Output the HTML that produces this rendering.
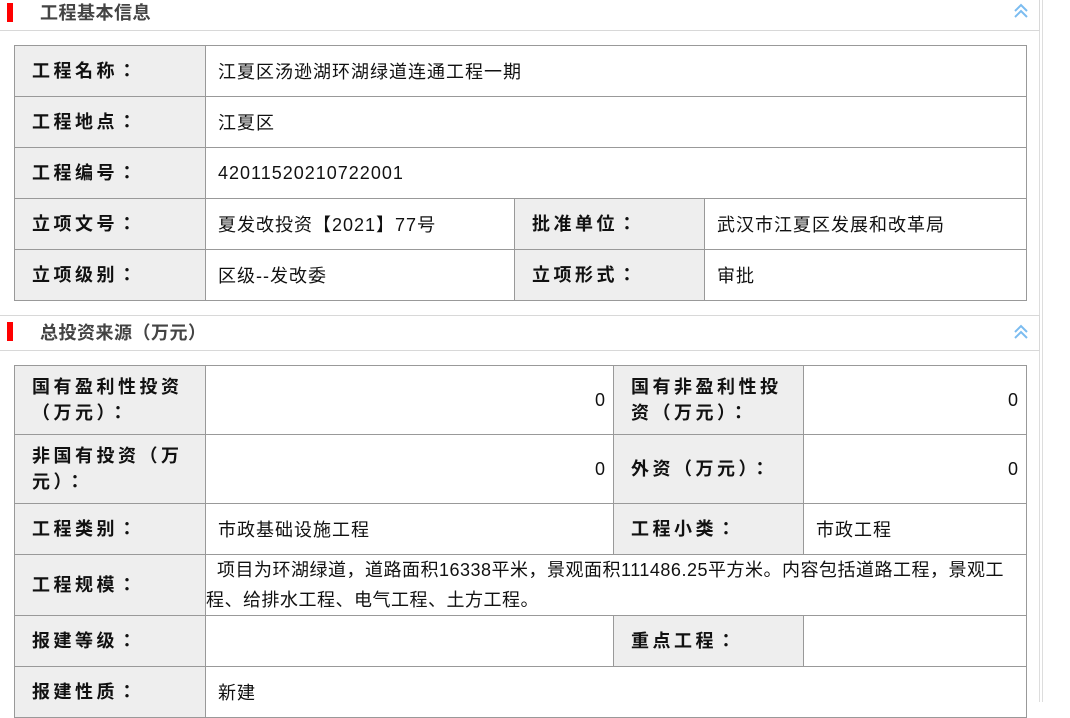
<!DOCTYPE html>
<html><head><meta charset="utf-8"><style>
body{margin:0;width:1070px;height:702px;overflow:hidden;background:#fff;font-family:"Liberation Sans","Noto Sans CJK JP",sans-serif;position:relative}
.vl{position:absolute;top:0;bottom:0;width:1px;background:#ddd}
.hd{position:absolute;left:0;width:1039px;height:34px;border-bottom:1px solid #d8d8d8;border-right:1px solid #d8d8d8}
.hd .bar{position:absolute;left:7px;top:4px;width:6px;height:19px;background:#f00}
.hd .t{position:absolute;left:40px;top:1px;font-size:18px;font-weight:bold;color:#444;line-height:26px;letter-spacing:0.5px}
.hd svg{position:absolute;left:1013px;top:4px}
table{position:absolute;left:14px;border-collapse:collapse;table-layout:fixed;width:1012px}
td{border:1px solid #999;padding:0;font-size:18px;color:#111;vertical-align:middle}
td.l{background:#eee;font-weight:bold;padding-left:17px;padding-right:8px;letter-spacing:3.5px;line-height:26px}
td.v{padding-left:12px;letter-spacing:1px}
td.n{text-align:right;padding-right:8px}
</style></head><body>
<div class="vl" style="left:1039px"></div><div class="vl" style="left:1042px"></div>
<div class="hd" style="top:-4px;height:34px"><div class="bar" style="top:7px"></div><div class="t" style="top:4px">工程基本信息</div>
<svg width="16" height="16" viewBox="0 0 16 16" style="top:7px"><path d="M2 8 L8 2 L14 8 M2 14 L8 8 L14 14" fill="none" stroke="#7bbcf0" stroke-width="2"/></svg></div>
<table style="top:45px">
<colgroup><col style="width:191px"><col style="width:309px"><col style="width:190px"><col style="width:322px"></colgroup>
<tr style="height:51px"><td class="l">工程名称：</td><td class="v" colspan="3">江夏区汤逊湖环湖绿道连通工程一期</td></tr>
<tr style="height:51px"><td class="l">工程地点：</td><td class="v" colspan="3">江夏区</td></tr>
<tr style="height:51px"><td class="l">工程编号：</td><td class="v" colspan="3">42011520210722001</td></tr>
<tr style="height:51px"><td class="l">立项文号：</td><td class="v">夏发改投资【2021】77号</td><td class="l">批准单位：</td><td class="v">武汉市江夏区发展和改革局</td></tr>
<tr style="height:51px"><td class="l">立项级别：</td><td class="v">区级--发改委</td><td class="l">立项形式：</td><td class="v">审批</td></tr>
</table>
<div class="hd" style="top:315px;border-top:1px solid #d8d8d8"><div class="bar" style="top:6px"></div><div class="t" style="top:4px">总投资来源（万元）</div>
<svg width="16" height="16" viewBox="0 0 16 16" style="top:8px"><path d="M2 8 L8 2 L14 8 M2 14 L8 8 L14 14" fill="none" stroke="#7bbcf0" stroke-width="2"/></svg></div>
<table style="top:365px">
<colgroup><col style="width:191px"><col style="width:408px"><col style="width:190px"><col style="width:223px"></colgroup>
<tr style="height:69px"><td class="l">国有盈利性投资（万元）：</td><td class="n">0</td><td class="l">国有非盈利性投资（万元）：</td><td class="n">0</td></tr>
<tr style="height:69px"><td class="l">非国有投资（万元）：</td><td class="n">0</td><td class="l">外资（万元）：</td><td class="n">0</td></tr>
<tr style="height:51px"><td class="l">工程类别：</td><td class="v">市政基础设施工程</td><td class="l">工程小类：</td><td class="v">市政工程</td></tr>
<tr style="height:61px"><td class="l">工程规模：</td><td colspan="3" style="line-height:30px;letter-spacing:0.5px">&nbsp;&nbsp;项目为环湖绿道，道路面积16338平米，景观面积111486.25平方米。内容包括道路工程，景观工程、给排水工程、电气工程、土方工程。</td></tr>
<tr style="height:51px"><td class="l">报建等级：</td><td class="v"></td><td class="l">重点工程：</td><td class="v"></td></tr>
<tr style="height:51px"><td class="l">报建性质：</td><td class="v" colspan="3">新建</td></tr>
</table>
</body></html>
